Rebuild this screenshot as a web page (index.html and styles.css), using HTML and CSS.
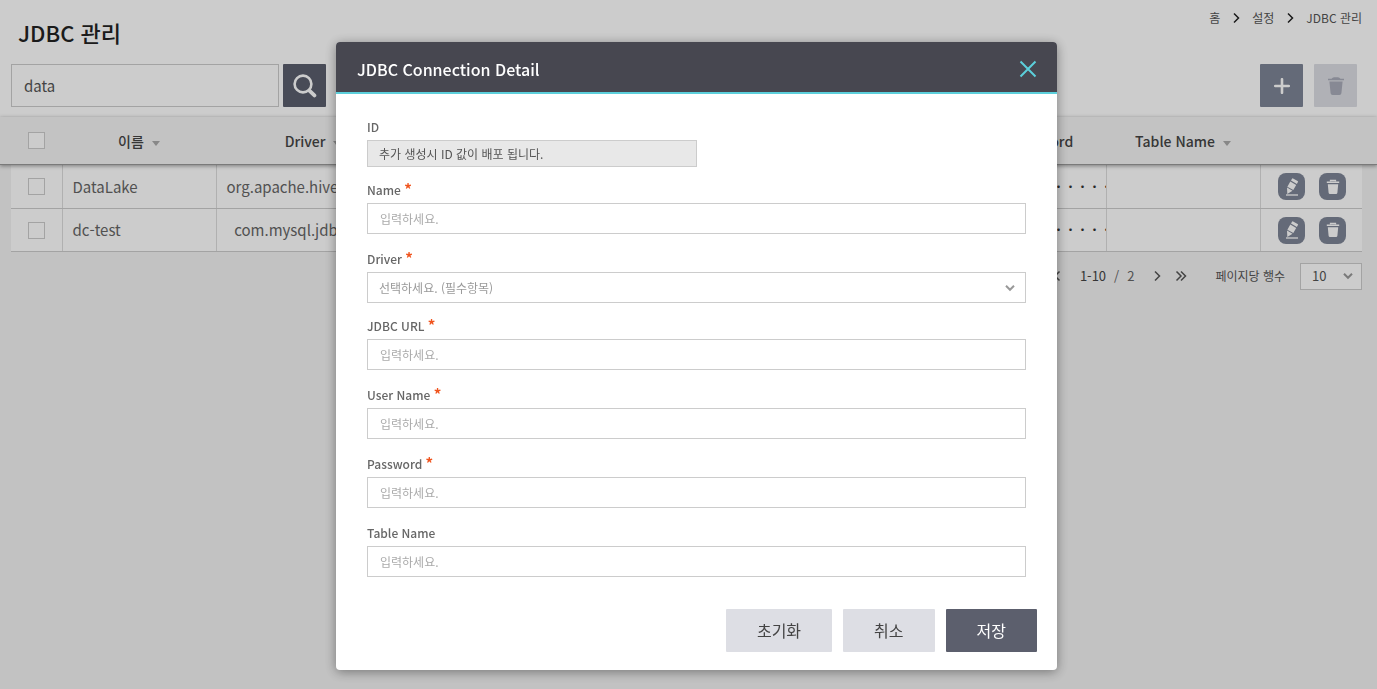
FILE: index.html
```html
<!DOCTYPE html>
<html lang="ko">
<head>
<meta charset="utf-8">
<title>JDBC 관리</title>
<meta name="viewport" content="width=device-width, initial-scale=1">
<link rel="stylesheet" href="styles.css">
</head>
<body>
<svg class="sprite" aria-hidden="true">
  <symbol id="i-search" viewBox="0 0 24 24"><circle cx="10" cy="10" r="8.400" fill="none" stroke="currentColor" stroke-width="2.600"/><path d="M16.400 16.600l5 4.800" fill="none" stroke="currentColor" stroke-width="3.800" stroke-linecap="round"/></symbol>
  <symbol id="i-plus" viewBox="0 0 16 16"><path d="M8 1.200v13.600M1.200 8h13.600" fill="none" stroke="currentColor" stroke-width="2.600" stroke-linecap="round"/></symbol>
  <symbol id="i-bin" viewBox="0 0 18 20"><path d="M1 2.800h3.500q1-1.600 2.500-1.600h4q1.500 0 2.500 1.600H17v1.400H1zM2.400 5.500h13.200l-1.200 11.700q-.2 1.800-2 1.800H5.600q-1.800 0-2-1.800z" fill="currentColor"/></symbol>
  <symbol id="i-trash" viewBox="0 0 14 16"><path d="M4.500 2.600V1.500h5v1.100" fill="none" stroke="currentColor" stroke-width="1.300"/><path d="M.8 2.600h12.400V4H.8zM1.800 5.200h10.400l-.8 8.600q-.2 1.200-1.300 1.200H3.900q-1.100 0-1.300-1.200z" fill="currentColor"/></symbol>
  <symbol id="i-edit" viewBox="0 0 16 20"><path d="M8 1.800q.4-.7 1.100-.3l4.500 2.500q.7.400.3 1.100l-1 1.800-5.900-3.300zM6.300 4.600l5.900 3.300-2.900 5.200-5.900-3.300zM3 10.600l5.500 3.100-5.200 3.300z" fill="currentColor"/><path d="M2 18h12" stroke="currentColor" stroke-width="1.300"/></symbol>
  <symbol id="i-right" viewBox="0 0 12 12"><path d="M4 1.500L8.500 6 4 10.500" fill="none" stroke="currentColor" stroke-width="1.500"/></symbol>
  <symbol id="i-left" viewBox="0 0 12 12"><path d="M8.500 1.500L4 6l4.500 4.500" fill="none" stroke="currentColor" stroke-width="1.500"/></symbol>
  <symbol id="i-last" viewBox="0 0 12 12"><path d="M1.500 1.500L6 6l-4.500 4.500M6 1.500L10.500 6 6 10.500" fill="none" stroke="currentColor" stroke-width="1.500"/></symbol>
  <symbol id="i-first" viewBox="0 0 12 12"><path d="M10.500 1.500L6 6l4.500 4.500M6 1.500L1.500 6 6 10.500" fill="none" stroke="currentColor" stroke-width="1.500"/></symbol>
  <symbol id="i-down" viewBox="0 0 12 12"><path d="M2 3.800L6 7.800l4-4" fill="none" stroke="currentColor" stroke-width="2"/></symbol>
  <symbol id="i-close" viewBox="0 0 18 18"><path d="M1.500 1.500l15 15M16.500 1.500l-15 15" fill="none" stroke="currentColor" stroke-width="2"/></symbol>
</svg>

<div class="page">
  <header class="page-head">
    <h1 class="page-title">JDBC 관리</h1>
    <nav class="crumbs" aria-label="breadcrumb">
      <a href="#">홈</a>
      <svg class="icon-s"><use href="#i-right"/></svg>
      <a href="#">설정</a>
      <svg class="icon-s"><use href="#i-right"/></svg>
      <a href="#">JDBC 관리</a>
    </nav>
  </header>

  <div class="toolbar">
    <input class="search-input" type="text" value="data" aria-label="검색">
    <button class="tool search" type="button" aria-label="검색"><svg class="icon-search"><use href="#i-search"/></svg></button>
    <span class="spacer"></span>
    <button class="tool add" type="button" aria-label="추가"><svg class="icon-m"><use href="#i-plus"/></svg></button>
    <button class="tool remove" type="button" aria-label="삭제"><svg class="icon-bin"><use href="#i-bin"/></svg></button>
  </div>

  <div class="grid-head">
    <table class="grid">
      <colgroup><col class="c-check"><col class="c-name"><col class="c-driver"><col><col><col class="c-pass"><col class="c-name"><col class="c-act"></colgroup>
      <thead>
        <tr>
          <th><input class="check" type="checkbox" aria-label="전체 선택"></th>
          <th>이름<span class="sort"></span></th>
          <th>Driver<span class="sort"></span></th>
          <th>URL<span class="sort"></span></th>
          <th>User Name<span class="sort"></span></th>
          <th>Password</th>
          <th>Table Name<span class="sort"></span></th>
          <th></th>
        </tr>
      </thead>
    </table>
  </div>

  <div class="grid-body">
    <table class="grid rows">
      <colgroup><col class="c-check"><col class="c-name"><col class="c-driver"><col><col><col class="c-pass"><col class="c-name"><col class="c-act"></colgroup>
      <tbody>
        <tr>
          <td class="center"><input class="check" type="checkbox" aria-label="DataLake"></td>
          <td>DataLake</td>
          <td class="center">org.apache.hive.jdbc.HiveDriver</td>
          <td></td>
          <td></td>
          <td class="secret">・・・・・・・・・・・・</td>
          <td></td>
          <td><div class="acts">
            <button class="act" type="button" aria-label="수정"><svg class="icon-edit"><use href="#i-edit"/></svg></button>
            <button class="act" type="button" aria-label="삭제"><svg class="icon-trash"><use href="#i-trash"/></svg></button>
          </div></td>
        </tr>
        <tr>
          <td class="center"><input class="check" type="checkbox" aria-label="dc-test"></td>
          <td>dc-test</td>
          <td class="center">com.mysql.jdbc.Driver</td>
          <td></td>
          <td></td>
          <td class="secret">・・・・・・・・・・・・</td>
          <td></td>
          <td><div class="acts">
            <button class="act" type="button" aria-label="수정"><svg class="icon-edit"><use href="#i-edit"/></svg></button>
            <button class="act" type="button" aria-label="삭제"><svg class="icon-trash"><use href="#i-trash"/></svg></button>
          </div></td>
        </tr>
      </tbody>
    </table>
    <div class="pager">
      <button class="page-btn" type="button" aria-label="처음"><svg class="icon-s"><use href="#i-first"/></svg></button>
      <button class="page-btn" type="button" aria-label="이전"><svg class="icon-s"><use href="#i-left"/></svg></button>
      <span class="range"><b>1-10</b><span>/</span><span>2</span></span>
      <button class="page-btn" type="button" aria-label="다음"><svg class="icon-s"><use href="#i-right"/></svg></button>
      <button class="page-btn" type="button" aria-label="마지막"><svg class="icon-s"><use href="#i-last"/></svg></button>
      <label class="per" for="per">페이지당 행수</label>
      <span class="select-wrap small">
        <select id="per" class="select"><option>10</option><option>20</option></select>
        <svg class="icon-s chevron"><use href="#i-down"/></svg>
      </span>
    </div>
  </div>
</div>

<div class="overlay">
  <form class="modal" role="dialog" aria-modal="true" aria-labelledby="dlg-title">
    <div class="modal-head">
      <h2 class="modal-title" id="dlg-title">JDBC Connection Detail</h2>
      <button class="close" type="button" aria-label="닫기"><svg class="icon-close"><use href="#i-close"/></svg></button>
    </div>
    <div class="modal-body">
      <div class="field tight">
        <label class="label" for="f-id">ID</label>
        <input class="input readonly" id="f-id" type="text" value="추가 생성시 ID 값이 배포 됩니다." readonly>
      </div>
      <div class="field">
        <label class="label" for="f-name">Name <span class="req">*</span></label>
        <input class="input" id="f-name" type="text" placeholder="입력하세요.">
      </div>
      <div class="field tight">
        <label class="label" for="f-driver">Driver <span class="req">*</span></label>
        <span class="select-wrap">
          <select id="f-driver" class="select pending"><option>선택하세요. (필수항목)</option></select>
          <svg class="icon-s chevron"><use href="#i-down"/></svg>
        </span>
      </div>
      <div class="field">
        <label class="label" for="f-url">JDBC URL <span class="req">*</span></label>
        <input class="input" id="f-url" type="text" placeholder="입력하세요.">
      </div>
      <div class="field">
        <label class="label" for="f-user">User Name <span class="req">*</span></label>
        <input class="input" id="f-user" type="text" placeholder="입력하세요.">
      </div>
      <div class="field">
        <label class="label" for="f-pass">Password <span class="req">*</span></label>
        <input class="input" id="f-pass" type="password" placeholder="입력하세요.">
      </div>
      <div class="field">
        <label class="label" for="f-table">Table Name</label>
        <input class="input" id="f-table" type="text" placeholder="입력하세요.">
      </div>
    </div>
    <div class="modal-foot">
      <button class="btn" type="reset">초기화</button>
      <button class="btn" type="button">취소</button>
      <button class="btn primary" type="submit">저장</button>
    </div>
  </form>
</div>
</body>
</html>
```

FILE: styles.css
```css
* { box-sizing: border-box; }

body {
  margin: 0;
  min-height: 100vh;
  background: #f3f3f3;
  color: #555;
  font: 400 15px/20px "Noto Sans CJK KR", "Noto Sans", sans-serif;
}

button, input, select { font: inherit; color: inherit; }
button { padding: 0; border: 0; background: none; cursor: pointer; }
a { color: inherit; text-decoration: none; }
svg { display: block; flex: none; }

.sprite { display: none; }
.icon-s { width: 12px; height: 12px; }
.icon-m { width: 16px; height: 16px; }
.icon-search { width: 24px; height: 24px; }
.icon-bin { width: 18px; height: 20px; }
.icon-edit { width: 16px; height: 20px; }
.icon-trash { width: 14px; height: 16px; }
.icon-close { width: 18px; height: 18px; }

/* Page header */
.page-head {
  display: flex;
  justify-content: space-between;
  align-items: flex-start;
  height: 64px;
  padding: 8px 15px 0 18px;
  background: #fff;
}
.page-title {
  margin: 0;
  padding-top: 8px;
  color: #222;
  font-size: 22px;
  line-height: 32px;
  font-weight: 500;
}
.crumbs {
  display: flex;
  align-items: center;
  gap: 10px;
  font-size: 12px;
}
.crumbs .icon-s { color: #222; }

.toolbar {
  display: flex;
  padding: 0 20px 10px 11px;
  background: #fff;
}
.search-input {
  width: 268px;
  height: 43px;
  padding: 0 12px;
  border: 1px solid #ccc;
  background: #fff;
}
.tool {
  display: flex;
  align-items: center;
  justify-content: center;
  width: 43px;
  height: 43px;
  border-radius: 1px;
  color: #fff;
}
.search { margin-left: 4px; background: #5a5e6d; }
.spacer { flex: 1; }
.add { margin-right: 11px; background: #7e8596; }
.remove { background: #dddee4; color: #a9acb9; }

/* Grid */
.grid {
  width: 100%;
  table-layout: fixed;
  border-collapse: collapse;
}
.c-check { width: 51px; }
.c-name { width: 154px; }
.c-driver { width: 194px; }
.c-pass { width: 130px; }
.c-act { width: 102px; }

.grid-head {
  position: relative;
  padding: 0 15px 0 11px;
  border-bottom: 1px solid #999;
  background: #f4f4f4;
  box-shadow: 0 1px 4px rgba(0, 0, 0, .4);
}
.grid th {
  height: 47px;
  padding: 0;
  color: #444;
  font-size: 14px;
  font-weight: 500;
}
.sort {
  display: inline-block;
  margin-left: 8px;
  border: 4px solid transparent;
  border-top: 5px solid #aaa;
  border-bottom: 0;
  vertical-align: 1px;
}
.check {
  display: block;
  width: 17px;
  height: 17px;
  margin: 0 auto;
  border: 1px solid #ccc;
  background: #fff;
  appearance: none;
}
.grid-body { padding: 0 15px 0 11px; }
.rows { background: #fff; }
.rows td {
  height: 43px;
  padding: 1px 10px 0;
  overflow: hidden;
  border-right: 1px solid #ddd;
  border-bottom: 1px solid #ccc;
  color: #666;
  text-overflow: ellipsis;
  white-space: nowrap;
}
.rows td:last-child { padding: 1px 9px 0 11px; border-right: 0; }
.rows .center { text-align: center; }
.rows .secret {
  padding-left: 16px;
  padding-right: 0;
  color: #333;
  font-size: 12px;
  text-overflow: clip;
}
.acts {
  display: flex;
  justify-content: center;
  gap: 14px;
}
.act {
  display: flex;
  align-items: center;
  justify-content: center;
  width: 27px;
  height: 27px;
  border-radius: 8px;
  background: #7e8596;
  color: #fff;
}

.pager {
  display: flex;
  align-items: center;
  justify-content: flex-end;
  gap: 12px;
  padding-top: 11px;
  font-size: 13px;
}
.range { display: flex; gap: 8px; padding: 0 5px; color: #666; }
.range b { color: #444; font-weight: 400; }
.per { margin-left: 16px; font-size: 12px; }

/* Form controls */
.select-wrap { display: block; position: relative; }
.select {
  display: block;
  width: 100%;
  height: 31px;
  padding: 0 32px 0 11px;
  border: 1px solid #ccc;
  border-radius: 0;
  background: #fff;
  font-size: 12px;
  appearance: none;
}
.pending { color: #999; }
.chevron {
  position: absolute;
  top: 50%;
  right: 10px;
  margin-top: -6px;
  color: #999;
  pointer-events: none;
}
.small { width: 62px; margin-left: 3px; }
.small .select { height: 27px; padding-right: 24px; font-size: 13px; }
.small .chevron { right: 8px; }

/* Dialog */
.overlay {
  position: fixed;
  inset: 0;
  z-index: 10;
  display: flex;
  align-items: flex-start;
  justify-content: center;
  padding: 42px 0 16px 16px;
  overflow: auto;
  background: rgba(0, 0, 0, .2);
}
.modal {
  width: 100%;
  max-width: 721px;
  overflow: hidden;
  border-radius: 4px;
  background: #fff;
  box-shadow: 0 2px 12px rgba(0, 0, 0, .4);
}
.modal-head {
  display: flex;
  align-items: center;
  justify-content: space-between;
  height: 52px;
  padding: 3px 20px 0 21px;
  border-bottom: 2px solid #5ccfdb;
  background: #474750;
}
.modal-title {
  margin: 0;
  color: #fff;
  font-size: 16px;
  line-height: 24px;
  font-weight: 500;
}
.close { color: #5ccfdb; }
.modal-body { padding: 24px 31px 0; }
.field { margin-bottom: 16px; }
.tight { margin-bottom: 14px; }
.label {
  display: block;
  height: 22px;
  color: #666;
  font-size: 12px;
  line-height: 18px;
  font-weight: 500;
}
.req {
  color: #f0541e;
  font-size: 15px;
  line-height: 1;
  font-weight: 700;
}
.input {
  display: block;
  width: 100%;
  height: 31px;
  padding: 0 12px;
  border: 1px solid #ccc;
  background: #fff;
  font-size: 12px;
}
.input::placeholder { color: #aaa; opacity: 1; }
.readonly {
  width: 50%;
  height: 27px;
  padding: 0 11px;
  background: #e8e8e8;
}
.modal-foot {
  display: flex;
  justify-content: flex-end;
  gap: 11px;
  padding: 16px 20px 18px;
}
.btn {
  height: 43px;
  padding: 0 31px 2px;
  border-radius: 1px;
  background: #dddee4;
  color: #444;
  font-size: 16px;
}
.primary { background: #5c5f6d; color: #fff; }
```
